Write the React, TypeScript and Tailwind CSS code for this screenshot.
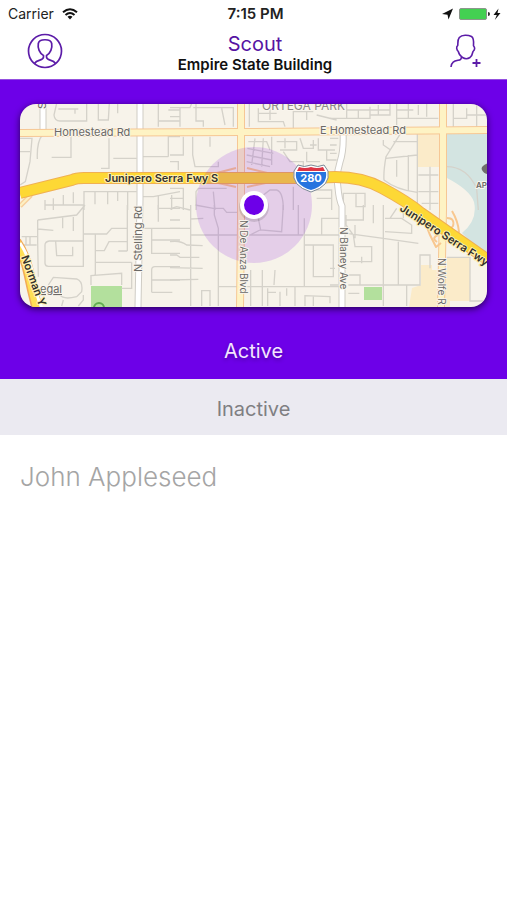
type Area = { x: number; y: number; d: string }

// side streets, surveyed per map tile at 3 units per pixel
const STREETS: Area[] = [
  {
    x: 10,
    y: 95,
    d: 'M30 130H66L60 200 46 260 30 270M30 170H60M140 25L132 60Q134 78 150 78H230V25M145 42H205M195 42V56M265 25V75H295L298 25M323 25V55M97 120Q80 140 82 192M183 125V187H125M297 130V220H273M310 190H380M398 185H475M510 125H475V185M445 25V95M475 45H510M445 78H510M222 345V290H380M105 345V315M105 330H222M130 310V345M160 300V328M190 292V325M255 290V328M293 290V328M323 290V318M353 290V345M398 305H430L510 290M445 300V345M485 300V345',
  },
  {
    x: 10,
    y: 205,
    d: 'M83 45L200 30 225 0M83 45V110M83 72L130 76M83 110L85 215M158 38V70M190 32V78M105 120Q105 110 118 108H220M105 120V175Q106 184 115 184H220V0M137 110L140 152H188V125M220 87H290L305 70H352M256 87V210M258 137H283L297 110H352M325 138H352M258 172H365M243 240V212L335 205V240M365 172V250H335M115 240L130 217 200 222Q220 230 215 260L200 275Q160 285 150 270M155 303L160 285M205 303L220 285V270M35 95H83M35 120H80M48 95V120M60 95V120M352 0V138M395 70H510M425 70V145H510M425 105H510M425 262V195Q425 185 435 185H510M425 225H510M425 262H487M445 0V50M445 10H510M480 45H510',
  },
  {
    x: 170,
    y: 95,
    d: 'M0 38H60L65 25M0 65H30M30 38V95M78 25V78H100V95M70 38H190V95M155 40L165 90M120 125V155M68 125V180L75 215H145V200M40 125V180H0M0 200H25V225M238 25V95M265 40V80H340L345 95M265 55H320M300 40V75M370 45V100M370 50H430M440 60L500 75M410 50V75M235 140H290L300 165M232 160L310 175M230 180L305 195M230 200L300 215M255 130L245 210M280 130L275 215M305 125V210M320 140H380V165H330M345 130V160M390 130L400 160H430V135M445 130V165H495M340 170L360 200H400V215M410 170V200H450M470 165V195H500M420 150H440M78 345V290L85 280H170M0 280H40V345M0 310H40M130 290L135 345M265 300H280L300 285H320Q340 290 340 345M370 275V345M420 285H485V345M440 310H485',
  },
  {
    x: 170,
    y: 205,
    d: 'M62 0V303M75 0L130 10H160L170 22H205M0 12L20 5 60 15M62 42L100 40M62 90H400M0 70H62M0 110Q30 105 50 120L98 122M0 150H20L30 157H88M0 188L98 190M0 225L85 223M133 0V30L145 70V303M145 245H510M95 303V257H120V303M242 195V303M277 195V303M315 195L312 240M265 40L272 75 335 80 340 0M240 90L270 75M385 0V90M403 40V245M403 90H510M403 120H490V215H430V120M455 90V40H510M293 250V303M330 260V303M293 262H318M350 250V272M375 245V303M405 303V272L480 275V295M430 272V303',
  },
  {
    x: 330,
    y: 95,
    d: 'M50 25V70H0M50 45H180M120 35V70H50M85 45V70M180 25V60H120M145 30V60M200 25V95M200 70H325M235 25V70M265 30V60M290 25V65M200 45H250M370 25V95M370 70H410V40M440 30V95M410 60H470M160 135V150L182 165M215 110L168 185Q160 230 162 255 200 285 262 292M168 190L262 180M200 195V245M235 180V290M190 140H262M262 115V345M0 130H25M0 150H20M0 175H20M265 240H325M300 215V345M265 290H325M40 345V295H105V335H78V295M275 325H325M350 215Q410 215 440 280L445 345',
  },
  {
    x: 330,
    y: 205,
    d: 'M160 0V303M50 85L160 100 265 115M48 30V60L70 90 75 125H125V170H60M100 0V45H48M130 0V55M165 40H215L245 60V85L165 80M200 10L180 40M220 10V40M95 155V175M0 190H15M0 240H25M75 100V60M55 240H270V150H300V190M350 157H420V288H471M205 110V240M230 240V303M50 210H90V240M55 265H88',
  },
]

const LOCAL_ROADS = 'M43 104V133M140 104V200L138 307M343 132Q344 150 340 162T338 188Q339 200 342 206V307'

const AVENUES = [
  'M20 133L241 132 488 130',
  'M241 104V220L240 307',
  'M443 104V210L441 307',
]

const FREEWAY = 'M20 193L72 180Q76 178 84 178H320Q356 174 382 188T421 213L488 260'

function LocalRoads() {
  return (
    <>
      <g fill="none" stroke="#d5d2ca" strokeWidth="4">
        {STREETS.map((s) => (
          <path key={`${s.x}-${s.y}`} d={s.d} transform={`translate(${s.x} ${s.y}) scale(.3333)`} />
        ))}
      </g>
      <g fill="none" strokeLinejoin="round">
        <path d={LOCAL_ROADS} stroke="#cfccc5" strokeWidth="7" />
        <path d={LOCAL_ROADS} stroke="#fff" strokeWidth="5" />
      </g>
    </>
  )
}

function MainRoads() {
  return (
    <g fill="none" strokeLinejoin="round">
      {AVENUES.map((d) => (
        <path key={d} d={d} stroke="#f6c795" strokeWidth="8" />
      ))}
      {AVENUES.map((d) => (
        <path key={d} d={d} stroke="#fef3c4" strokeWidth="6" />
      ))}
      <g stroke="#f8c78f" strokeWidth="2">
        <path d="M205 176L236 168M205 180L236 187M247 168L280 176M247 187L280 180" />
        <path d="M428 218Q425 225 430 235L436 247 441 243M452 211Q458 221 459 232L448 242" />
        <path d="M438 222Q431 222 433 229 438 233 440 226M447 218Q455 218 453 226 449 231 447 225M438 235Q431 238 437 242M448 235Q456 235 450 240" />
      </g>
      <path d="M20 206L31 195" stroke="#f8cf9b" strokeWidth="5" />
      <path d="M20 206L31 195" stroke="#fdf0c4" strokeWidth="2" />
      <path d="M16 242Q25 255 29 274T38 312" stroke="#f2ab58" strokeWidth="11" />
      <path d="M16 242Q25 255 29 274T38 312" stroke="#ffdf55" strokeWidth="8" />
      <path d="M20 243Q31 260 34 280T44 312" stroke="#fff" strokeWidth="3" />
      <path d={FREEWAY} stroke="#f0b052" strokeWidth="12" />
      <path d={FREEWAY} stroke="#fdd835" strokeWidth="10" />
    </g>
  )
}

function MapLabels() {
  return (
    <g
      fontFamily="Inter, 'Liberation Sans', sans-serif"
      fontSize="11"
      fill="#6b6966"
      stroke="#f9f5ed"
      strokeWidth="2"
      strokeLinejoin="round"
      paintOrder="stroke"
    >
      <text x="54" y="136">Homestead Rd</text>
      <text x="320" y="134">E Homestead Rd</text>
      <text x="262" y="110" fontSize="12" fill="#8d8b88">ORTEGA PARK</text>
      <text transform="translate(46 109) rotate(-90)">S</text>
      <text transform="translate(142 272) rotate(-90)">N Stelling Rd</text>
      <text transform="translate(240 220) rotate(90)" fontSize="10">N De Anza Blvd</text>
      <text transform="translate(340 227) rotate(90)" fontSize="10">N Blaney Ave</text>
      <text transform="translate(438 258) rotate(90)" fontSize="10">N Wolfe R</text>
      <text x="40" y="293" textDecoration="underline">egal</text>
      <text x="476" y="188" fontSize="8" fontWeight="600">AP</text>
      <g fill="#33312c" fontWeight="600" stroke="#fff0b0">
        <text x="105" y="182">Junipero Serra Fwy S</text>
        <text transform="translate(399 210) rotate(33)">Junipero Serra Fwy</text>
        <text transform="translate(21 257) rotate(70)" fontSize="11">Norman Y</text>
      </g>
    </g>
  )
}

function RouteShield() {
  return (
    <g>
      <path
        d="M298 165Q304 168 311 165 318 168 324 165L328 171Q331 186 311 192 291 186 294 171Z"
        fill="#fff"
        stroke="#7b8795"
      />
      <path d="M299 167Q305 169 311 167 317 169 323 167L325 171H297Z" fill="#dc3545" />
      <path d="M296 172H326Q328 185 311 190 294 185 296 172Z" fill="#2674df" />
      <text
        x="311"
        y="182"
        textAnchor="middle"
        fontFamily="Inter, 'Liberation Sans', sans-serif"
        fontSize="11"
        fontWeight="700"
        fill="#fff"
      >
        280
      </text>
    </g>
  )
}

function LocationMap() {
  return (
    <svg
      viewBox="20 104 467 203"
      preserveAspectRatio="xMidYMid slice"
      className="block h-[203px] w-full rounded-2xl bg-[#f7f3ea] shadow-[0_2px_7px_rgba(0,0,0,0.65)]"
      role="img"
      aria-label="Map of current location"
    >
      <path d="M447 133H488V260L462 233Q478 220 474 202 470 190 447 178Z" fill="#d3e4e1" />
      <path d="M418 133H439V167H418ZM421 265H432V270H447V257H470V301H450V307H409L412 288 421 285Z" fill="#fbebc9" />
      <path d="M91 286H122V307H91ZM364 287H382V300H364Z" fill="#b3e09d" />
      <circle cx="99" cy="308" r="5" fill="none" stroke="#61ad51" strokeWidth="2" />
      <LocalRoads />
      <MainRoads />
      <path d="M488 163Q480 166 482 170T488 174Z" fill="#706d6b" />
      <circle cx="254" cy="205" r="58" fill="#7800dc" fillOpacity=".15" />
      <MapLabels />
      <RouteShield />
      <circle cx="254" cy="207" r="15" fill="#000" fillOpacity=".12" />
      <circle cx="254" cy="205" r="12" fill="#6d00e8" stroke="#fff" strokeWidth="4" />
    </svg>
  )
}

function StatusBar() {
  return (
    <div className="grid h-7 grid-cols-3 items-center pr-1 pl-2 text-sm text-[#222]">
      <div className="flex items-center gap-2">
        <span>Carrier</span>
        <svg width="16" height="12" viewBox="0 0 16 12" fill="none" stroke="#111" strokeWidth="2">
          <path d="M1 4.3Q8-1.8 15 4.3M3.5 7Q8 3 12.5 7" />
          <path d="M5.5 8.8Q8 6.7 10.5 8.8L8 11.5Z" fill="#111" stroke="none" />
        </svg>
      </div>
      <span className="text-center text-[15px] font-semibold">7:15 PM</span>
      <div className="flex items-center justify-end">
        <svg width="62" height="14" viewBox="0 0 62 14">
          <path d="M12 1.5L7.5 12.5 6.5 7.7 1 7Z" fill="#111" />
          <rect x="18.5" y="1.5" width="27" height="11" rx="1.5" fill="#43d052" stroke="#8c968c" />
          <path d="M47 5Q49 5 49 7T47 9Z" fill="#333" />
          <path d="M57.5 1.5L52.5 8H55.8L53.8 13 59.5 6H56.5Z" fill="#111" />
        </svg>
      </div>
    </div>
  )
}

function ProfileIcon() {
  return (
    <svg width="36" height="36" viewBox="0 0 36 36" fill="none" stroke="#5c1ca8" strokeWidth="1.7" strokeLinejoin="round">
      <circle cx="18" cy="18" r="16.5" />
      <path d="M7.5 30.5C10 26 16.5 28 16.5 24V22.5C12.5 20.5 10.5 15 11.3 10.5 12.2 5.5 23.8 5.5 24.7 10.5 25.5 15 23.5 20.5 19.5 22.5V24C19.5 28 26 26 28.5 30.5" />
    </svg>
  )
}

function AddPersonIcon() {
  return (
    <svg width="34" height="36" viewBox="0 0 34 36" fill="none" stroke="#5c1ca8" strokeWidth="1.6" strokeLinejoin="round">
      <path d="M2 34C2.5 29 5 28 9 27.3 11.5 27 12.8 26 12.3 23.3L13.5 24.5Q17.3 27 21 24.5C22.8 23 23.5 21 24 18.5 26 16.8 26.2 14.5 24.5 12.7 24.8 9 25 5 22.5 3.5 19 1.8 13 1.5 10.3 4.5 8.3 7 9 10 8.8 12.3 6.8 14 7.7 17 9.3 18.5Q10.5 22.5 12.3 23.3" />
      <path d="M27.5 26V34M23.5 30H31.5" strokeWidth="1.8" />
    </svg>
  )
}

function NavBar() {
  return (
    <div className="flex h-[51px] items-start justify-between pr-6 pl-[27px]">
      <button type="button" aria-label="Profile" className="w-9 pt-[5px]">
        <ProfileIcon />
      </button>
      <div className="pt-1 text-center">
        <h1 className="text-xl leading-6 text-[#5614a3]">Scout</h1>
        <p className="text-[15px] leading-[18px] font-semibold text-[#111]">Empire State Building</p>
      </div>
      <button type="button" aria-label="Add person" className="flex w-9 justify-end pt-[5px]">
        <AddPersonIcon />
      </button>
    </div>
  )
}

export default function App() {
  return (
    <div className="min-h-dvh bg-white font-[Inter,'Liberation_Sans',sans-serif]">
      <header>
        <StatusBar />
        <NavBar />
      </header>
      <main>
        <section className="border-t border-[#9450df] bg-[#6d00e8] px-5 pt-6">
          <LocationMap />
          <h2 className="flex h-[72px] items-center justify-center pt-4 text-xl text-[#f3e6ff] [text-shadow:0_2px_4px_rgba(0,0,0,0.3)]">
            Active
          </h2>
        </section>
        <section>
          <h2 className="flex h-14 items-center justify-center bg-[#ebeaf1] pt-1 text-xl text-[#7f7f83]">
            Inactive
          </h2>
          <ul>
            <li className="px-5 pt-6 text-[26px] leading-9 font-light text-[#a5a5a5]">John Appleseed</li>
          </ul>
        </section>
      </main>
    </div>
  )
}
